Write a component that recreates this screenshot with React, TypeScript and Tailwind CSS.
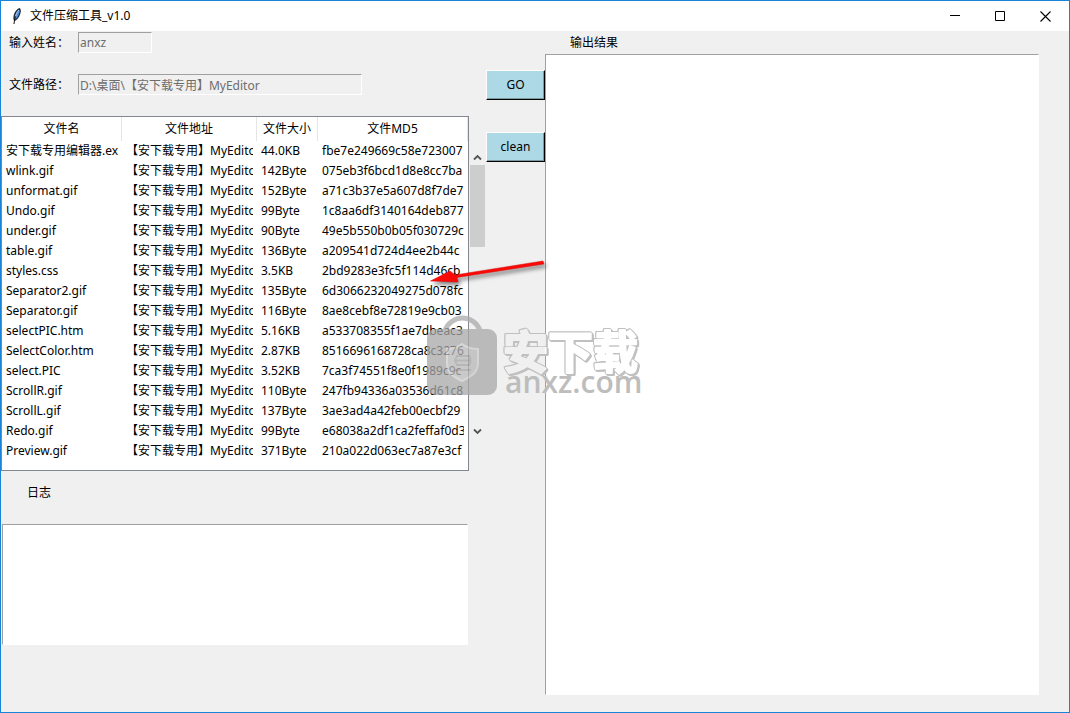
import React from 'react';

type FileRow = {
  name: string;
  path: string;
  size: string;
  md5: string;
};

const PATH = '【安下载专用】MyEditor';

const files: FileRow[] = [
  { name: '安下载专用编辑器.exe', path: PATH, size: '44.0KB', md5: 'fbe7e249669c58e723007' },
  { name: 'wlink.gif', path: PATH, size: '142Byte', md5: '075eb3f6bcd1d8e8cc7ba' },
  { name: 'unformat.gif', path: PATH, size: '152Byte', md5: 'a71c3b37e5a607d8f7de7' },
  { name: 'Undo.gif', path: PATH, size: '99Byte', md5: '1c8aa6df3140164deb877' },
  { name: 'under.gif', path: PATH, size: '90Byte', md5: '49e5b550b0b05f030729c' },
  { name: 'table.gif', path: PATH, size: '136Byte', md5: 'a209541d724d4ee2b44c' },
  { name: 'styles.css', path: PATH, size: '3.5KB', md5: '2bd9283e3fc5f114d46cb' },
  { name: 'Separator2.gif', path: PATH, size: '135Byte', md5: '6d3066232049275d078fc' },
  { name: 'Separator.gif', path: PATH, size: '116Byte', md5: '8ae8cebf8e72819e9cb03' },
  { name: 'selectPIC.htm', path: PATH, size: '5.16KB', md5: 'a533708355f1ae7dbeac3' },
  { name: 'SelectColor.htm', path: PATH, size: '2.87KB', md5: '8516696168728ca8c3276' },
  { name: 'select.PIC', path: PATH, size: '3.52KB', md5: '7ca3f74551f8e0f1989c9c' },
  { name: 'ScrollR.gif', path: PATH, size: '110Byte', md5: '247fb94336a03536d61c8' },
  { name: 'ScrollL.gif', path: PATH, size: '137Byte', md5: '3ae3ad4a42feb00ecbf29' },
  { name: 'Redo.gif', path: PATH, size: '99Byte', md5: 'e68038a2df1ca2feffaf0d3' },
  { name: 'Preview.gif', path: PATH, size: '371Byte', md5: '210a022d063ec7a87e3cf' },
];

const columns = ['文件名', '文件地址', '文件大小', '文件MD5'];

const sunken = 'border border-t-[#a0a0a0] border-l-[#a0a0a0] border-r-white border-b-white';

const Feather = () => (
  <svg width="12" height="18" viewBox="0 0 12 18" aria-hidden="true">
    <path d="M8.500 1C5.500 2 3 6 2.500 9.500c-.3 2 0 3.500.8 4.500l1.500-.5C7.500 11.500 9.500 8 9.800 4.500c.1-1.800-.3-3.300-1.300-3.500z" fill="#1b2838" />
    <path d="M8 2.500C5.800 4 4 7.500 3.600 11l.8 1.500C6.500 10.500 8.500 7 8.800 4z" fill="#4f8fdc" />
    <path d="M7.800 3C6 5 5 7.500 4.600 9.500" fill="none" stroke="#b5cdea" />
    <path d="M4.500 9.500C3.800 12 3.300 14 3 17" fill="none" stroke="#111" />
  </svg>
);

const TitleBar = () => (
  <header className="flex h-[30px] shrink-0 items-center bg-white">
    <div className="flex flex-1 items-center gap-[7px] pl-[10px]">
      <Feather />
      <h1>文件压缩工具_v1.0</h1>
    </div>
    <button type="button" aria-label="Minimize" className="flex h-full w-[45px] items-center justify-center">
      <svg width="10" height="10" viewBox="0 0 10 10"><path d="M0 4.500h10" stroke="#000" /></svg>
    </button>
    <button type="button" aria-label="Maximize" className="flex h-full w-[45px] items-center justify-center">
      <svg width="10" height="10" viewBox="0 0 10 10"><path d="M.5.5h9v9h-9z" fill="none" stroke="#000" /></svg>
    </button>
    <button type="button" aria-label="Close" className="flex h-full w-[47px] items-center justify-center">
      <svg width="11" height="11" viewBox="0 0 11 11"><path d="M.5.5l10 10M10.500.5l-10 10" stroke="#000" strokeWidth="1.100" /></svg>
    </button>
  </header>
);

const FileTable = () => (
  <div className="h-[355px] border border-[#828790] bg-white">
    <table className="w-full table-fixed border-separate border-spacing-0">
      <colgroup>
        <col className="w-[120px]" />
        <col className="w-[135px]" />
        <col className="w-[61px]" />
        <col />
      </colgroup>
      <thead>
        <tr className="h-6">
          {columns.map((title) => (
            <th key={title} className="border-r border-[#e5e5e5] p-0 font-normal whitespace-nowrap">
              {title}
            </th>
          ))}
        </tr>
      </thead>
      <tbody>
        {files.map((file) => (
          <tr key={file.name} className="h-5">
            {[file.name, file.path, file.size, file.md5].map((text, i) => (
              <td key={i} className="px-1 py-0">
                <div className="overflow-hidden leading-5 whitespace-nowrap">{text}</div>
              </td>
            ))}
          </tr>
        ))}
      </tbody>
    </table>
  </div>
);

const ScrollBar = () => (
  <div className="mt-[118px] flex h-[290px] w-[15px] flex-col">
    <button type="button" aria-label="Scroll up" className="flex h-4 items-center justify-center">
      <svg width="9" height="7" viewBox="0 0 9 7"><path d="M1 5.500l3.500-3.500L8 5.500" fill="none" stroke="#555" strokeWidth="1.800" /></svg>
    </button>
    <div className="flex-1">
      <div className="h-[82px] bg-[#cdcdcd]" />
    </div>
    <button type="button" aria-label="Scroll down" className="flex h-4 items-center justify-center">
      <svg width="9" height="7" viewBox="0 0 9 7"><path d="M1 1.500L4.500 5 8 1.500" fill="none" stroke="#555" strokeWidth="1.800" /></svg>
    </button>
  </div>
);

const ActionButton = ({ children }: { children: React.ReactNode }) => (
  <button
    type="button"
    className="h-[30px] w-full border border-t-white border-r-black border-b-black border-l-white bg-[#add8e6] shadow-[inset_-1px_-1px_0_#7a9aa4]"
  >
    {children}
  </button>
);

const Watermark = () => (
  <svg
    className="pointer-events-none absolute top-[309px] left-[419px]"
    width="230"
    height="92"
    viewBox="0 0 230 92"
    aria-hidden="true"
  >
    <defs>
      <linearGradient id="letters" gradientUnits="userSpaceOnUse" x1="0" y1="0" x2="230" y2="0">
        <stop offset="0.543" stopColor="#f0f0f0" />
        <stop offset="0.543" stopColor="#fff" />
      </linearGradient>
    </defs>
    <g opacity="0.75">
      <path d="M25 20.500a18.500 18.500 0 0 1 35 0" fill="none" stroke="#aaa" strokeWidth="5" />
      <rect x="7" y="19" width="70" height="66" rx="9" fill="#a8a8a8" />
      <path d="M42 34c5 4 10 5 16 5v14c0 9-6 13-16 18-10-5-15-9-15-18V39c6 0 10-1 15-5z" fill="#b7b7b7" stroke="#cbcbcb" strokeWidth="2" />
      <path d="M36 46h14M34 50.500h17M36 55h14M35 60h16M37 46c-2 3-2 6 0 9M49 46c2 3 2 6 0 9" fill="none" stroke="#a0a0a0" strokeWidth="1.800" />
    </g>
    <text
      x="83"
      y="59"
      fontSize="45"
      fontWeight="700"
      fill="url(#letters)"
      stroke="url(#letters)"
      strokeWidth="2"
      strokeLinejoin="round"
      className="font-['Noto_Sans_CJK_SC',sans-serif] [filter:drop-shadow(1px_1px_0_#c0c0c0)_drop-shadow(-1px_-1px_0_#c0c0c0)_drop-shadow(1px_0_0_#c0c0c0)_drop-shadow(0_1px_0_#c0c0c0)]"
    >
      安下载
    </text>
    <text x="85" y="83" fontSize="30" fontWeight="600" fill="#bdbdbd" className="font-['Open_Sans',sans-serif]">
      anxz.com
    </text>
  </svg>
);

const Arrow = () => (
  <svg
    className="pointer-events-none absolute top-[254px] left-[424px] drop-shadow-[2px_3px_2px_rgba(0,0,0,0.5)]"
    width="125"
    height="40"
    viewBox="0 0 125 40"
    aria-hidden="true"
  >
    <path d="M118 6L119 9 32 22.500 33 27 5.500 26 25 16 30 20z" fill="#fa0a06" stroke="#d80b08" strokeWidth="0.500" strokeLinejoin="round" />
  </svg>
);

const App = () => {
  return (
    <div className="relative flex h-screen flex-col overflow-hidden border border-[#1883d7] bg-[#f0f0f0] font-['Noto_Sans','Noto_Sans_CJK_SC',sans-serif] text-[12px] leading-4 text-black">
      <TitleBar />

      <main className="flex min-h-0 flex-1">
        <section className="flex w-[468px] shrink-0 flex-col">
          <div className="mt-px flex h-[21px] items-center pl-2">
            <label htmlFor="name" className="w-[69px] whitespace-nowrap">输入姓名：</label>
            <input id="name" disabled defaultValue="anxz" className={`h-full w-[74px] px-px text-[#6d6d6d] ${sunken}`} />
          </div>
          <div className="mt-[21px] flex h-[21px] items-center pl-2">
            <label htmlFor="path" className="w-[69px] whitespace-nowrap">文件路径：</label>
            <input
              id="path"
              disabled
              defaultValue="D:\桌面\【安下载专用】MyEditor"
              className={`h-full w-[284px] px-px text-[#6d6d6d] ${sunken}`}
            />
          </div>

          <div className="mt-[21px]">
            <FileTable />
          </div>

          <label htmlFor="log" className="mt-[14px] pl-[26px]">日志</label>
          <textarea id="log" className={`mx-px mt-[23px] block h-[121px] resize-none bg-white ${sunken}`} />
        </section>

        <div className="w-[17px] shrink-0 pl-px">
          <ScrollBar />
        </div>

        <div className="flex w-[59px] shrink-0 flex-col gap-8 pt-[39px]">
          <ActionButton>GO</ActionButton>
          <ActionButton>clean</ActionButton>
        </div>

        <section className="mr-[30px] mb-[17px] flex min-w-0 flex-1 flex-col pt-1">
          <label htmlFor="output" className="pl-[25px]">输出结果</label>
          <textarea id="output" className={`mt-[3px] block min-h-0 w-full flex-1 resize-none bg-white ${sunken}`} />
        </section>
      </main>

      <Watermark />
      <Arrow />
    </div>
  );
};

export default App;
